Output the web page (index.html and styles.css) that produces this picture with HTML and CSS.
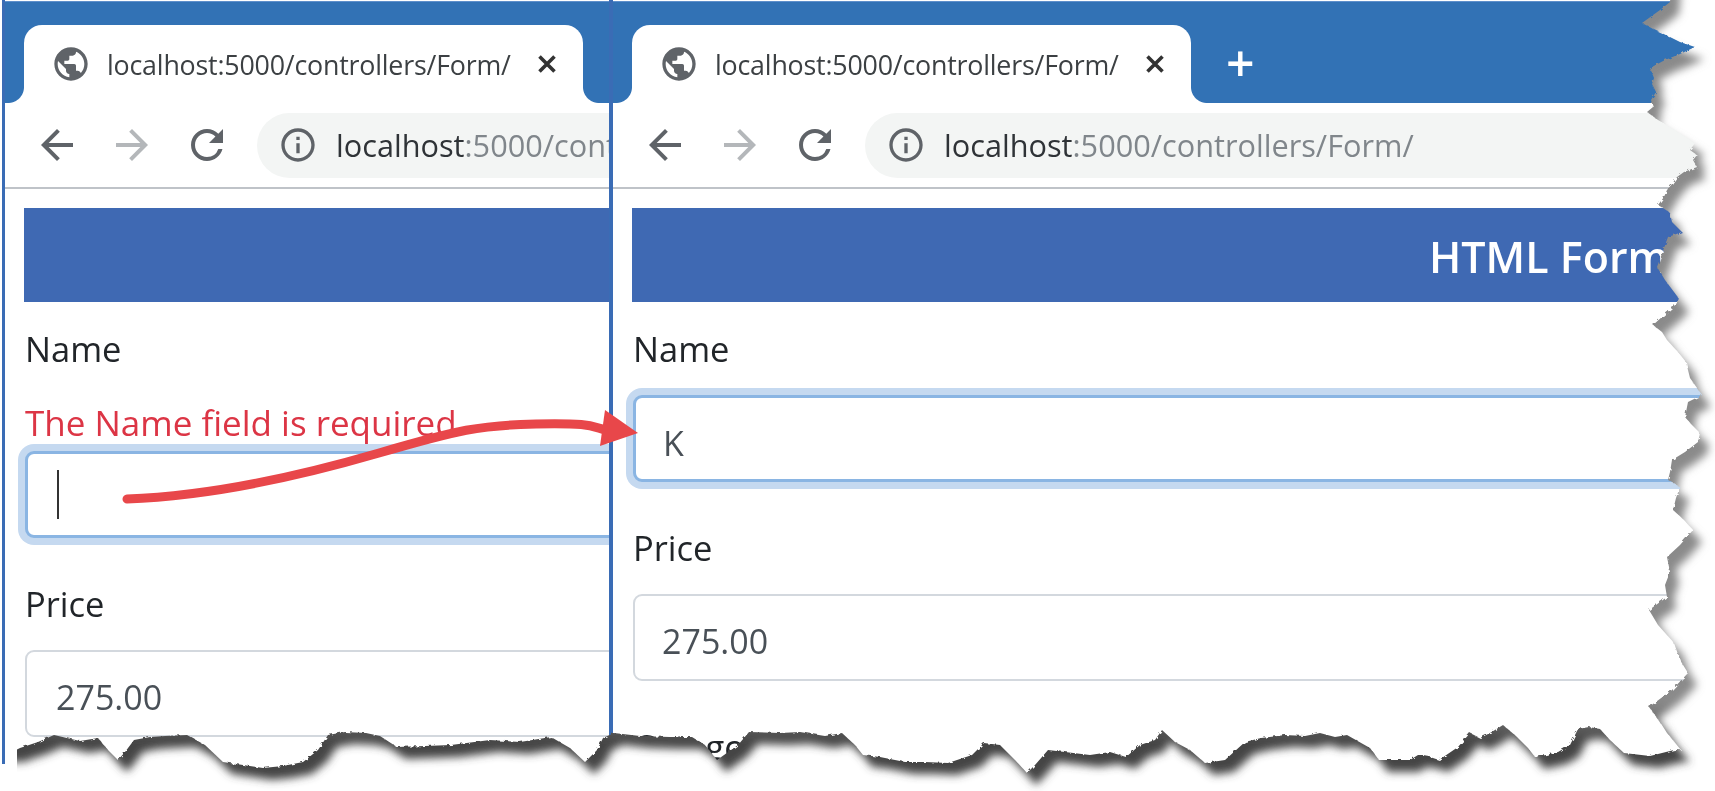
FILE: index.html
```html
<!DOCTYPE html>
<html lang="en">
<head>
    <meta charset="utf-8" />
    <title>HTML Form validation</title>
    <link rel="stylesheet" href="styles.css">
</head>
<body>
<svg class="defs" width="0" height="0">
    <symbol id="i-globe" viewBox="0 0 24 24"><path d="M12 2C6.48 2 2 6.48 2 12s4.48 10 10 10 10-4.48 10-10S17.52 2 12 2zm-1 17.93c-3.95-.49-7-3.85-7-7.93 0-.62.08-1.21.21-1.79L9 15v1c0 1.1.9 2 2 2v1.93zm6.9-2.54c-.26-.81-1-1.39-1.9-1.39h-1v-3c0-.55-.45-1-1-1H8v-2h2c.55 0 1-.45 1-1V7h2c1.1 0 2-.9 2-2v-.41c2.93 1.19 5 4.06 5 7.41 0 2.08-.8 3.97-2.1 5.39z"/></symbol>
    <symbol id="i-back" viewBox="0 0 24 24"><path d="M20 11H7.83l5.59-5.59L12 4l-8 8 8 8 1.41-1.41L7.83 13H20v-2z"/></symbol>
    <symbol id="i-forward" viewBox="0 0 24 24"><path d="M12 4l-1.41 1.41L16.17 11H4v2h12.17l-5.58 5.59L12 20l8-8z"/></symbol>
    <symbol id="i-reload" viewBox="0 0 24 24"><path d="M17.65 6.35A7.958 7.958 0 0 0 12 4c-4.42 0-7.99 3.58-7.99 8s3.57 8 7.99 8c3.73 0 6.84-2.55 7.73-6h-2.08A5.99 5.99 0 0 1 12 18c-3.31 0-6-2.69-6-6s2.69-6 6-6c1.66 0 3.14.69 4.22 1.78L13 11h7V4l-2.35 2.35z"/></symbol>
    <symbol id="i-info" viewBox="0 0 24 24"><path d="M11 7h2v2h-2zm0 4h2v6h-2zm1-9C6.48 2 2 6.48 2 12s4.48 10 10 10 10-4.48 10-10S17.52 2 12 2zm0 18c-4.41 0-8-3.59-8-8s3.59-8 8-8 8 3.59 8 8-3.59 8-8 8z"/></symbol>
    <symbol id="i-close" viewBox="0 0 20 20"><path d="M2.5 2.5l15 15M17.5 2.5l-15 15" fill="none" stroke="currentColor" stroke-width="3.6"/></symbol>
</svg>

<div class="canvas">
    <!-- left window: failed validation -->
    <div class="pane pane-left">
        <div class="strip">
            <div class="tab">
                <svg class="ico-globe"><use href="#i-globe"/></svg>
                <span class="tab-title">localhost:5000/controllers/Form/</span>
                <svg class="ico-close"><use href="#i-close"/></svg>
            </div>
        </div>
        <div class="toolbar">
            <svg class="ico-nav"><use href="#i-back"/></svg>
            <svg class="ico-nav off"><use href="#i-forward"/></svg>
            <svg class="ico-nav"><use href="#i-reload"/></svg>
            <div class="omnibox">
                <svg class="ico-info"><use href="#i-info"/></svg>
                <span class="url"><b>localhost</b>:5000/controllers/Form/</span>
            </div>
        </div>
        <div class="page">
            <div class="banner"></div>
            <div class="group">
                <div class="label has-error">Name</div>
                <div class="error">The Name field is required</div>
                <div class="field focus"><i class="caret"></i></div>
            </div>
            <div class="group">
                <div class="label">Price</div>
                <div class="field">275.00</div>
            </div>
        </div>
    </div>

    <!-- right window: after typing -->
    <div class="pane pane-right">
        <div class="strip">
            <div class="tab">
                <svg class="ico-globe"><use href="#i-globe"/></svg>
                <span class="tab-title">localhost:5000/controllers/Form/</span>
                <svg class="ico-close"><use href="#i-close"/></svg>
            </div>
            <span class="plus">+</span>
        </div>
        <div class="toolbar">
            <svg class="ico-nav"><use href="#i-back"/></svg>
            <svg class="ico-nav off"><use href="#i-forward"/></svg>
            <svg class="ico-nav"><use href="#i-reload"/></svg>
            <div class="omnibox">
                <svg class="ico-info"><use href="#i-info"/></svg>
                <span class="url"><b>localhost</b>:5000/controllers/Form/</span>
            </div>
        </div>
        <div class="page">
            <div class="banner">HTML Form</div>
            <div class="group">
                <div class="label">Name</div>
                <div class="field focus">K</div>
            </div>
            <div class="group">
                <div class="label">Price</div>
                <div class="field">275.00</div>
            </div>
            <div class="group">
                <div class="label">Category</div>
            </div>
        </div>
    </div>

    <!-- torn paper edge and the red arrow lie over both windows -->
    <svg class="overlay" width="1715" height="791" viewBox="0 0 1715 791">
        <defs>
            <path id="sheet" d="M-20 -20L1672 -20L1670 2L1660 10L1642 23L1655 30L1668 36L1680 42L1695 47L1680 54L1665 60L1650 68L1654 78L1652 84L1656 92L1651 100L1653 107L1647 112L1658 120L1675 130L1695 143L1690 150L1697 155L1693 160L1697 167L1684 172L1677 177L1672 184L1667 190L1664 197L1658 205L1666 210L1670 213L1672 222L1682 232L1668 237L1664 248L1657 267L1665 280L1680 300L1672 308L1653 325L1662 332L1667 340L1678 352L1686 362L1690 378L1702 395L1688 402L1685 417L1692 425L1700 433L1698 442L1685 452L1672 460L1670 472L1668 480L1680 487L1676 498L1673 510L1684 520L1693 530L1680 545L1667 557L1670 572L1665 585L1667 597L1649 610L1658 625L1674 643L1680 660L1688 673L1672 690L1649 707L1660 722L1667 733L1681 750L1674 750L1650 756L1624 753L1610 740L1600 729L1589 727L1578 729L1570 745L1558 752L1546 755L1535 757L1528 748L1515 735L1503 725L1490 733L1480 738L1470 733L1458 747L1439 760L1430 757L1418 755L1410 760L1395 760L1379 760L1370 748L1347 735L1335 737L1320 733L1305 736L1285 735L1261 738L1245 742L1225 760L1205 763L1190 750L1175 742L1162 730L1155 740L1140 745L1126 757L1110 752L1090 755L1065 752L1048 750L1035 765L1027 773L1015 760L1000 745L984 743L972 755L948 763L925 762L905 762L880 757L863 755L855 745L842 733L825 736L800 732L780 733L749 732L738 745L717 760L705 745L692 737L670 737L640 736L614 733L603 738L597 750L585 762L570 748L551 737L520 742L490 740L451 745L425 746L397 747L380 736L366 733L345 732L328 735L318 750L303 762L283 766L263 768L243 765L223 762L205 745L187 735L165 736L150 737L134 740L125 752L118 760L108 750L98 738L80 741L54 735L38 742L20 748L16 750L-20 750Z"/>
            <linearGradient id="shade" gradientUnits="userSpaceOnUse" x1="0" y1="690" x2="0" y2="730">
                <stop offset="0" stop-color="#8a8a8a"/>
                <stop offset="1" stop-color="#444"/>
            </linearGradient>
            <filter id="rough" filterUnits="userSpaceOnUse" x="-30" y="-30" width="1775" height="851">
                <feTurbulence type="fractalNoise" baseFrequency="0.22" numOctaves="2" seed="4"/>
                <feDisplacementMap in="SourceGraphic" scale="4"/>
            </filter>
            <filter id="soft" filterUnits="userSpaceOnUse" x="-30" y="-30" width="1775" height="851">
                <feGaussianBlur stdDeviation="4"/>
            </filter>
            <mask id="outside" maskUnits="userSpaceOnUse" x="0" y="0" width="1715" height="791">
                <rect width="1715" height="791" fill="#fff"/>
                <use href="#sheet" fill="#000" filter="url(#rough)"/>
            </mask>
        </defs>
        <g mask="url(#outside)">
            <rect width="1715" height="791" fill="#fff"/>
            <use href="#sheet" x="9" y="12" fill="url(#shade)" filter="url(#soft)"/>
        </g>
        <rect y="745" width="17" height="46" fill="#fff"/>
        <rect x="2" y="745" width="3" height="19" fill="#3a6cb5"/>
        <path class="arrow-line" d="M127 499C210 496 300 476 379 453S480 425 536 424S590 426 606 430"/>
        <path class="arrow-head" d="M605 410L638 433L600 446Z"/>
    </svg>
</div>
</body>
</html>
```

FILE: styles.css
```css
/* reset */
html,body{margin:0; padding:0; background:#fff;}
body{font-family:"Open Sans","Noto Sans",sans-serif; color:#212529;}
.defs{position:absolute;}

/* the reference is an enlarged picture, so everything is slightly soft */
.canvas{display:flex; width:1715px; height:791px; overflow:hidden; position:relative; background:#fff; filter:blur(0.5px);}

/* windows */
.pane{display:flex; flex-direction:column; overflow:hidden; height:791px; background:#fff;}
.pane-left{flex:none; width:604px; margin-left:2px; border-left:3px solid #3a6cb5; border-right:4px solid #3a6cb5;}
.pane-right{flex:1; min-width:0;}

/* tab strip */
.strip{flex:none; display:flex; align-items:flex-start; height:102px; box-sizing:border-box; margin-top:1px; padding:23px 0 0 19px; background:#3272b5; border-top:1px solid #5e8fcb;}
.tab{flex:none; position:relative; display:flex; align-items:center; box-sizing:border-box; width:559px; height:78px; padding:0 26px 0 27px; background:#fff; border-radius:18px 18px 0 0;}
.tab:before,.tab:after{content:""; position:absolute; bottom:0; width:16px; height:16px;}
.tab:before{left:-16px; background:radial-gradient(circle at 0 0, transparent 15.5px, #fff 16.5px);}
.tab:after{right:-16px; background:radial-gradient(circle at 100% 0, transparent 15.5px, #fff 16.5px);}
.ico-globe{flex:none; width:40px; height:40px; margin-right:16px; fill:#5f6368;}
.tab-title{flex:1; font-size:26.8px; color:#3c4043; white-space:nowrap; letter-spacing:-0.2px;}
.ico-close{flex:none; width:20px; height:20px; color:#333;}
.plus{margin:-1px 0 0 35px; color:#fff; font-size:50px; line-height:78px; font-weight:600;}

/* toolbar */
.toolbar{flex:none; display:flex; align-items:center; height:84px; padding-left:28px; background:#fff; border-bottom:2px solid #bfc3c8;}
.ico-nav{flex:none; width:48px; height:48px; margin-right:27px; fill:#5f6368;}
.ico-nav.off{fill:#b4b7ba;}
.omnibox{flex:1; display:flex; align-items:center; height:65px; min-width:0; margin-left:-1px; padding-left:21px; background:#f3f5f4; border-radius:33px 0 0 33px; white-space:nowrap; overflow:hidden;}
.ico-info{flex:none; width:40px; height:40px; margin-right:18px; fill:#5f6368;}
.url{font-size:30.7px; color:#80868b;}
.url b{font-weight:400; color:#2f3337;}

/* page body */
.page{flex:1; padding:19px 0 0 19px;}
.banner{height:94px; padding-left:797px; line-height:98px; background:#3f69b3; color:#fff; font-size:43px; font-weight:600; white-space:nowrap;}
.group{margin:0 0 40px 1px;}
.banner + .group{margin-top:21px;}
.label{height:54px; line-height:52px; margin-bottom:18px; font-size:34.5px;}
.label.has-error{margin-bottom:20px;}
.error{height:54px; line-height:52px; font-size:35px; color:#dc3545; white-space:nowrap;}
.field{height:87px; line-height:90px; box-sizing:border-box; margin-right:-20px; padding-left:29px; background:#fff; border:2px solid #d3d8de; border-radius:9px; font-size:34px; color:#495057;}
.pane-right .field{padding-left:27px;}
.field.focus{border:3px solid #8ab5e3; box-shadow:0 0 0 7px #c5d9f0;}
.caret{display:inline-block; width:2px; height:49px; margin-top:16px; background:#333; vertical-align:top;}

/* overlay */
.overlay{position:absolute; top:0; left:0;}
.arrow-line{fill:none; stroke:#e8474a; stroke-width:9; stroke-linecap:round;}
.arrow-head{fill:#e8474a;}
```
